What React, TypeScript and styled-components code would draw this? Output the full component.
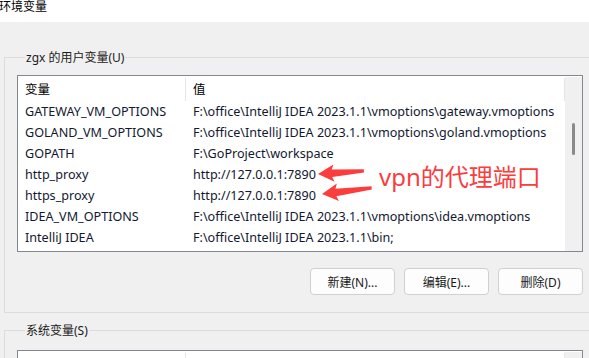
import styled, { createGlobalStyle } from "styled-components";

const GlobalStyle = createGlobalStyle`
  html, body {
    margin: 0;
    padding: 0;
    background: #f0f0f0;
    overflow: hidden;
  }
  body {
    font-family: "Noto Sans", "Noto Sans CJK SC", sans-serif;
    font-size: 12px;
    color: #1a1a1a;
  }
`;

const Window = styled.div`
  width: 589px;
  height: 358px;
  overflow: hidden;
  background: #f0f0f0;
`;

const TitleBar = styled.div`
  height: 22px;
  background: #ffffff;
  line-height: 14px;
  text-indent: -1px;
  color: #000;
`;

const Body = styled.div`
  padding: 0 0 0 4px;
`;

const GroupBox = styled.div<{ $top: number }>`
  margin-top: ${(p) => p.$top}px;
  margin-right: -30px;
  border: 1px solid #dcdcdc;
  padding: 0 0 17px 12px;
`;

const Caption = styled.div`
  width: fit-content;
  margin: -9px 0 0 8px;
  padding: 0 1px;
  background: #f0f0f0;
  line-height: 17px;
  color: #1a1a1a;
`;

const ListWrap = styled.div<{ $gap: number }>`
  position: relative;
  margin-top: ${(p) => p.$gap}px;
  width: 566px;
`;

const ListView = styled.div`
  box-sizing: border-box;
  width: 566px;
  height: 177px;
  border: 1px solid #828790;
  background: #ffffff;
  display: grid;
  grid-template-columns: 1fr 17px;
  overflow: hidden;
`;

const Table = styled.div`
  display: grid;
  grid-template-columns: 168px 1fr;
  grid-template-rows: 25px;
  grid-auto-rows: 21px;
  align-content: start;
`;

const HeaderRow = styled.div`
  grid-column: 1 / -1;
  display: grid;
  grid-template-columns: 168px 1fr;
  height: 25px;
`;

const HeaderCell = styled.div`
  display: flex;
  align-items: center;
  padding-left: 7px;
  position: relative;
  font-size: 12.5px;
  color: #000;
  &::after {
    content: "";
    position: absolute;
    right: 0;
    top: 2px;
    bottom: 0;
    width: 1px;
    background: #e5e5e5;
  }
`;

const Cell = styled.div`
  display: flex;
  align-items: center;
  padding-left: 7px;
  white-space: nowrap;
  overflow: hidden;
  font-size: 12.6px;
  color: #121830;
`;

const Scrollbar = styled.div`
  background: #f0f0f0;
  margin-top: 1px;
  padding-top: 46px;
  display: flex;
  justify-content: center;
`;

const Thumb = styled.div`
  width: 3px;
  height: 32px;
  border-radius: 2px;
  background: #8a8a8a;
`;

const ButtonRow = styled.div`
  width: 566px;
  display: flex;
  justify-content: flex-end;
  gap: 9px;
  margin-top: 16px;
`;

const Button = styled.button`
  box-sizing: border-box;
  width: 85px;
  height: 27px;
  border: 1px solid #d0d0d0;
  border-radius: 4px;
  background: #fdfdfd;
  font: inherit;
  color: #1a1a1a;
  padding: 0;
`;

const Annotation = styled.div`
  position: absolute;
  left: 362px;
  top: 87px;
  font-size: 24px;
  line-height: 30px;
  color: #fb3d3d;
  white-space: nowrap;
`;

const ArrowLayer = styled.svg`
  position: absolute;
  left: 293px;
  top: 86px;
  overflow: visible;
`;

const rows: [string, string][] = [
  ["GATEWAY_VM_OPTIONS", "F:\\office\\IntelliJ IDEA 2023.1.1\\vmoptions\\gateway.vmoptions"],
  ["GOLAND_VM_OPTIONS", "F:\\office\\IntelliJ IDEA 2023.1.1\\vmoptions\\goland.vmoptions"],
  ["GOPATH", "F:\\GoProject\\workspace"],
  ["http_proxy", "http://127.0.0.1:7890"],
  ["https_proxy", "http://127.0.0.1:7890"],
  ["IDEA_VM_OPTIONS", "F:\\office\\IntelliJ IDEA 2023.1.1\\vmoptions\\idea.vmoptions"],
  ["IntelliJ IDEA", "F:\\office\\IntelliJ IDEA 2023.1.1\\bin;"],
];

// tapered arrow pointing left, tip at origin
const arrowPath = (len: number) =>
  `M0,0 L16,-8.5 L14,-3.6 L${len},-1.6 L${len},1.6 L14,4 L16,9 Z`;

const Arrow = ({ x, y, len, angle }: { x: number; y: number; len: number; angle: number }) => (
  <path d={arrowPath(len)} fill="#fb3d3d" transform={`translate(${x} ${y}) rotate(${angle})`} />
);

const VarList = ({ data }: { data: [string, string][] }) => (
  <ListView>
    <Table>
      <HeaderRow>
        <HeaderCell>变量</HeaderCell>
        <HeaderCell>值</HeaderCell>
      </HeaderRow>
      {data.flatMap(([name, value]) => [
        <Cell key={name}>{name}</Cell>,
        <Cell key={name + "-v"}>{value}</Cell>,
      ])}
    </Table>
    <Scrollbar>{data.length > 0 && <Thumb />}</Scrollbar>
  </ListView>
);

export default function App() {
  return (
    <Window>
      <GlobalStyle />
      <TitleBar>环境变量</TitleBar>
      <Body>
        <GroupBox $top={35}>
          <Caption>zgx 的用户变量(U)</Caption>
          <ListWrap $gap={9}>
            <VarList data={rows} />
            <ArrowLayer width="80" height="40">
              <Arrow x={8} y={13} len={46} angle={-4} />
              <Arrow x={12} y={33} len={50} angle={-7} />
            </ArrowLayer>
            <Annotation>vpn的代理端口</Annotation>
          </ListWrap>
          <ButtonRow>
            <Button>新建(N)...</Button>
            <Button>编辑(E)...</Button>
            <Button>删除(D)</Button>
          </ButtonRow>
        </GroupBox>
        <GroupBox $top={17}>
          <Caption>系统变量(S)</Caption>
          <ListWrap $gap={11}>
            <VarList data={[]} />
          </ListWrap>
        </GroupBox>
      </Body>
    </Window>
  );
}
